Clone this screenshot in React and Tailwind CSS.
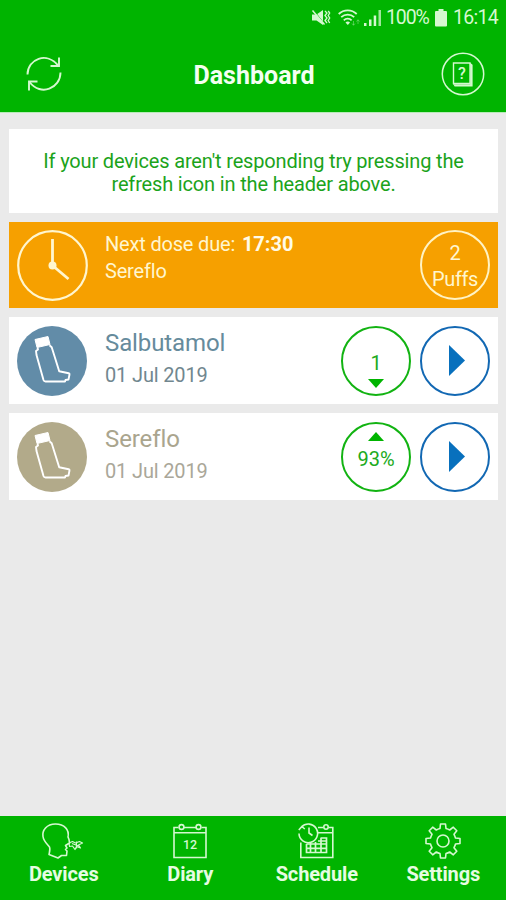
import React from "react";

const MuteIcon = () => (
  <svg width="20" height="20" viewBox="0 0 20 20" fill="none" stroke="currentColor">
    <path d="M1 6.500h4.500L12 2v15l-6.500-4.500H1z" fill="currentColor" stroke="none" />
    <path d="M2.500 2l11 14" stroke="#00b400" strokeWidth="1" />
    <path d="M1.500 2.500l12 14" strokeWidth="1.500" />
    <path d="M14 3l2 2-2 2.500 2 2.500-2 2.500 2 2.500M17.200 3l1.500 2-1.500 2.500 1.500 2.500-1.500 2.500 1.500 2.500" strokeWidth="1.300" />
  </svg>
);

const WifiIcon = () => (
  <svg width="23" height="18" viewBox="0 0 23 18" fill="none" stroke="currentColor" strokeWidth="1.800">
    <path d="M.7 5a13 13 0 0 1 18 0M3.200 8.200a9.500 9.500 0 0 1 13 0M5.800 11.300a5.500 5.500 0 0 1 7.800 0" />
    <path d="M7.500 13.500a3 3 0 0 1 4.500 0l-2.200 2.500z" fill="currentColor" stroke="none" />
    <path d="M15.500 12v4M14 14.500l1.500 1.800 1.500-1.800M20 15v-4M18.500 12.500l1.500-1.800 1.500 1.800" strokeWidth="1" opacity=".35" />
  </svg>
);

const SignalIcon = () => (
  <svg width="18" height="18" viewBox="0 0 18 18" fill="currentColor">
    <path d="M0 14h2.500v3H0zM5 10.500h2.500V17H5zM9.700 6.500h2.500V17H9.700z" />
    <path d="M14.500 1H17v16h-2.500z" opacity=".75" />
  </svg>
);

const BatteryIcon = () => (
  <svg width="12" height="18" viewBox="0 0 12 18" fill="currentColor">
    <path d="M3.500 0h5v2H11q1 0 1 1v13.500q0 1-1 1H1q-1 0-1-1V3q0-1 1-1h2.500z" />
  </svg>
);

const RefreshIcon = () => (
  <svg width="36" height="36" viewBox="0 0 36 36" fill="none" stroke="currentColor" strokeWidth="1.900">
    <path d="M1.500 18.500C1.500 3 21-5 32.500 10M34.500 16.500C34.500 32 15 41 3.500 26" />
    <path d="M33 1.500v8.500h-8.500M3 34.500V25.500h8.500" />
  </svg>
);

const HelpIcon = () => (
  <svg width="44" height="44" viewBox="0 0 44 44" fill="none" stroke="currentColor">
    <circle cx="22" cy="22" r="20.700" strokeWidth="1.500" />
    <path d="M12.500 11h16.500v20.500H12.500z" strokeWidth="1.400" />
    <path d="M29 11.500l2 1.500v21H14l-1.500-2.500M14 32.800h15.800V12" strokeWidth="1.200" />
  </svg>
);

const ClockIcon = () => (
  <svg width="71" height="71" viewBox="0 0 71 71" fill="none" stroke="currentColor">
    <circle cx="35.500" cy="35.500" r="34.300" strokeWidth="2.200" />
    <path d="M35.500 35.500V9M35.500 35.500l16 13.500" strokeWidth="2.800" />
    <circle cx="35.500" cy="35.500" r="4" fill="currentColor" stroke="none" />
  </svg>
);

const InhalerIcon = () => (
  <svg width="70" height="70" viewBox="0 0 70 70" fill="none" stroke="#fff" strokeLinejoin="round">
    <path d="M18 13.500l13-3 2 8-13 3z" fill="#fff" strokeWidth="1" />
    <path d="M20.500 21.500l.5 2-2 1.500.5 4 7 25q.5 1.500 2 1.500h19.500l.5-1.500 3-.5 1-5q.2-1-.8-1.200l-9.500-2-7.500-24-2.200-2" strokeWidth="1.900" />
  </svg>
);

const HeadIcon = () => (
  <svg width="44" height="36" viewBox="0 0 44 36" fill="none" stroke="currentColor" strokeWidth="1.600" strokeLinejoin="round">
    <path d="M28 16.500l-1-2.500C28.500 7 23.500 1 14.500 1S1 7.500 2 13.500c.5 4.500 4 7.500 6.500 10.500 1 2 0 5-.5 7.500l9 3.500 3.500-2.500h5l.5-4.500-1.500-1.500 1.500-1.500-1.500-2.500 4-2.500z" />
    <path d="M28 20l3.500-1.500 3 1.500 4-1.500 3 1.500-4 2 2 3-4-1.500-1.500 3-2.500-3.500-3 .5zM31 20.500l8 3M35.500 18.500v7" strokeWidth="1.200" />
  </svg>
);

const DiaryIcon = () => (
  <svg width="36" height="36" viewBox="0 0 36 36" fill="none" stroke="currentColor" strokeWidth="1.600">
    <path d="M6.500 4.500h-4.500v30h32v-30h-4.500M12 4.500h12.500M2 9.800h32" />
    <circle cx="9.500" cy="4" r="2.400" />
    <circle cx="26.500" cy="4" r="2.400" />
    <text x="18" y="25.500" textAnchor="middle" fill="currentColor" stroke="none" className="text-[12.500px] font-medium">12</text>
  </svg>
);

const ScheduleIcon = () => (
  <svg width="36" height="36" viewBox="0 0 36 36" fill="none" stroke="currentColor" strokeWidth="1.600">
    <path d="M2.800 19.500v15h32v-30h-4M20 4.500h5M20 9.700h14.800" />
    <circle cx="28" cy="4" r="2.200" />
    <path d="M3.500 4A9.300 9.300 0 1 1 1 10.500M.8 7l3-3.500 3 2.500M11 4.500V10l3.500 2.500" />
    <path d="M8.500 21v8.500h20V15h-6M8.500 21h20M8.500 25.300h20M12.500 20v9.500M17.500 19v10.500M23 15v14.500M20 18h8.500" strokeWidth="1.700" />
  </svg>
);

const GearIcon = () => (
  <svg width="36" height="36" viewBox="0 0 36 36" fill="none" stroke="currentColor" strokeWidth="1.600" strokeLinejoin="round">
    <path d="M15.500 1h5L21 5.500q2 .5 3.700 1.500L28.300 4.200l3.500 3.500L29 11.300q1 1.700 1.500 3.700l4.500.5v5l-4.500.5q-.5 2-1.500 3.700l2.800 3.600-3.500 3.500L24.700 29q-1.700 1-3.700 1.500L20.500 35h-5L15 30.500q-2-.5-3.700-1.500L7.700 31.800l-3.500-3.500L7 24.700Q6 23 5.500 21L1 20.500v-5L5.500 15Q6 13 7 11.300L4.200 7.700l3.500-3.500L11.300 7Q13 6 15 5.500z" />
    <circle cx="18" cy="18" r="6" />
  </svg>
);

const devices = [
  {
    name: "Salbutamol",
    date: "01 Jul 2019",
    circle: "bg-[#628ca8]",
    nameColor: "text-[#668b9c]",
    dateColor: "text-[#71878f]",
    value: "1",
    direction: "down",
  },
  {
    name: "Sereflo",
    date: "01 Jul 2019",
    circle: "bg-[#b2aa8a]",
    nameColor: "text-[#aaa58e]",
    dateColor: "text-[#aaa799]",
    value: "93%",
    direction: "up",
  },
];

const tabs = [
  { label: "Devices", icon: HeadIcon },
  { label: "Diary", icon: DiaryIcon },
  { label: "Schedule", icon: ScheduleIcon },
  { label: "Settings", icon: GearIcon },
];

const DeviceRow = ({ device }) => (
  <div className="flex h-[87px] items-center bg-white pl-2 pr-2">
    <div className={`h-[70px] w-[70px] shrink-0 rounded-full ${device.circle}`}>
      <InhalerIcon />
    </div>
    <div className="ml-[18px] flex-1 whitespace-nowrap pb-[3px]">
      <p className={`text-[24px] leading-[32px] tracking-[-0.1px] ${device.nameColor}`}>{device.name}</p>
      <p className={`text-[20px] leading-[32px] tracking-[-0.15px] ${device.dateColor}`}>{device.date}</p>
    </div>
    <div className="flex h-[70px] w-[70px] flex-col items-center rounded-full border-2 border-[#12b312] text-[#20aa20]">
      <svg className="mt-2" width="16" height="9" viewBox="0 0 16 9" fill="#00b400">
        {device.direction === "up" && <path d="M8 0l8 9H0z" />}
      </svg>
      <span className="mt-[4px] text-[20px] leading-[28px]">{device.value}</span>
      <svg className="mt-[2px]" width="16" height="9" viewBox="0 0 16 9" fill="#00b400">
        {device.direction === "down" && <path d="M0 0h16L8 9z" />}
      </svg>
    </div>
    <div className="ml-[9px] flex h-[70px] w-[70px] items-center justify-center rounded-full border-2 border-[#1268b3] pl-1">
      <svg width="16" height="31" viewBox="0 0 16 31" fill="#0870bd">
        <path d="M0 0l16 15.500L0 31z" />
      </svg>
    </div>
  </div>
);

const App = () => {
  return (
    <div className="flex h-[900px] w-[506px] flex-col overflow-hidden bg-[#eaeaea] font-['Roboto',sans-serif]">
      <header className="h-[113px] border-b border-[#b9eab9] bg-[#00b400] text-[#d5f8d0]">
        <div className="flex h-[36px] items-center justify-end pr-2">
          <MuteIcon />
          <span className="ml-[7px]"><WifiIcon /></span>
          <span className="ml-[3px]"><SignalIcon /></span>
          <span className="ml-[4px] w-[45px] whitespace-nowrap text-[19.500px] tracking-[-1.100px]">100%</span>
          <span className="ml-[4px]"><BatteryIcon /></span>
          <span className="ml-[6px] w-[45px] whitespace-nowrap text-[19.500px] tracking-[-0.700px]">16:14</span>
        </div>
        <div className="flex h-[76px] items-center justify-between pl-[26px] pr-[21px]">
          <RefreshIcon />
          <h1 className="pl-[5px] pt-[3px] text-[25px] font-bold text-[#f4fff1]">Dashboard</h1>
          <div className="grid place-items-center">
            <div className="col-start-1 row-start-1"><HelpIcon /></div>
            <span className="col-start-1 row-start-1 pr-[2px] text-[16px] font-medium leading-none">?</span>
          </div>
        </div>
      </header>

      <main className="flex flex-1 flex-col gap-[9px] pl-[9px] pr-2 pt-4">
        <div className="flex h-[84px] items-center justify-center bg-white pt-[3px] text-center text-[20px] leading-[23px] tracking-[-0.160px] text-[#1ba31b]">
          <p className="whitespace-nowrap">
            If your devices aren't responding try pressing the
            <br />
            refresh icon in the header above.
          </p>
        </div>

        <div className="flex h-[86px] items-center bg-[#f6a000] pl-2 pr-2 text-[#fff6cf]">
          <ClockIcon />
          <div className="ml-[17px] flex-1 self-start whitespace-nowrap pt-[9px] text-[20px] leading-[27px] tracking-[-0.180px]">
            <p>
              Next dose due: <span className="ml-[2px] font-bold tracking-normal text-[#fffbe8]">17:30</span>
            </p>
            <p>Sereflo</p>
          </div>
          <div className="flex h-[70px] w-[70px] flex-col items-center justify-center rounded-full border-2 border-[#fff3c4] pt-[2px] text-[20px] leading-[26px] tracking-[-0.400px]">
            <span>2</span>
            <span>Puffs</span>
          </div>
        </div>

        {devices.map((device) => (
          <DeviceRow key={device.name} device={device} />
        ))}
      </main>

      <nav className="flex h-[84px] bg-[#00b400] text-[#d5f8d0]">
        {tabs.map(({ label, icon: Icon }) => (
          <div key={label} className="flex flex-1 flex-col items-center pt-[7px]">
            <Icon />
            <span className="mt-[3px] pl-px text-[20px] font-bold leading-[24px] tracking-[-0.150px] text-[#e6fce2]">{label}</span>
          </div>
        ))}
      </nav>
    </div>
  );
};

export default App;
